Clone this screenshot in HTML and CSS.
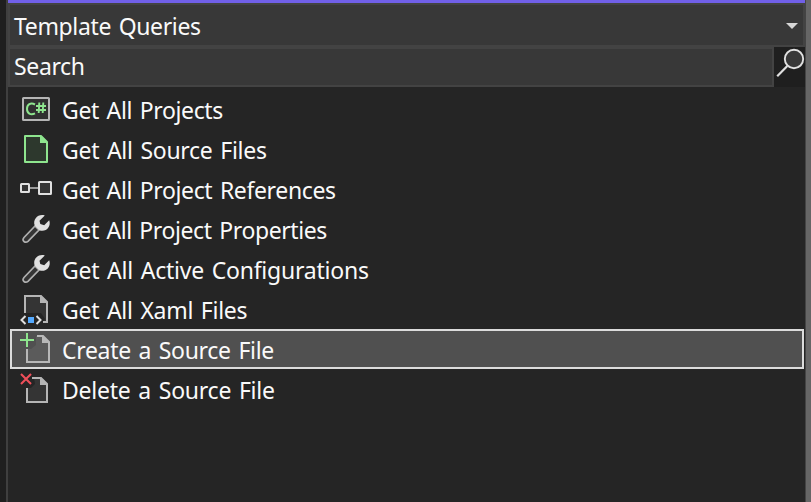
FILE: index.html
```html
<!DOCTYPE html>
<html lang="en">
<head>
<meta charset="utf-8">
<title>Template Queries</title>
<link rel="stylesheet" href="styles.css">
</head>
<body>
<main class="panel">
  <div class="accent"></div>
  <header class="dropdown"><span class="title">Template Queries</span>
    <svg class="caret" width="12" height="6" viewBox="0 0 12 6"><path d="M0 0h12L6 6z" fill="#d6d6d6"/></svg>
  </header>
  <div class="search">
    <div class="field"><span class="hint">Search</span></div>
    <div class="go"><svg width="31" height="40" viewBox="0 0 31 40"><circle cx="20" cy="12" r="9.2" fill="#383838" stroke="#e0e0e0" stroke-width="1.9"/><path d="M13.3 19L3.2 29.2" stroke="#e0e0e0" stroke-width="2.2"/></svg></div>
  </div>
  <ul class="list">
    <li class="row">
      <svg class="icon" viewBox="0 0 36 40"><rect x="5" y="9" width="26" height="22" rx=".5" fill="#303030" stroke="#b5b5b5" stroke-width="2"/><path d="M17 15.5C12.5 13.2 9 15.6 9 19.9s3.5 6.7 8 4.5" fill="none" stroke="#8ee58e" stroke-width="2"/><path d="M21.3 13.5L20.7 24M25.3 13.5L24.7 24M18 17h10M18 21h10" stroke="#8ee58e" stroke-width="1.9"/></svg>
      <span class="tight">Get All Projects</span></li>
    <li class="row">
      <svg class="icon" viewBox="0 0 36 40"><path d="M7 7h16l6 6v20H7z" fill="#2d382d" stroke="#8ee58e" stroke-width="2" stroke-linejoin="round"/><path d="M22 6v8h8z" fill="#8ee58e"/></svg>
      <span>Get All Source Files</span></li>
    <li class="row">
      <svg class="icon" viewBox="0 0 36 40"><path d="M12 19h8" stroke="#9b9b9b" stroke-width="2"/><g fill="#343434" stroke="#e0e0e0" stroke-width="2"><rect x="3" y="15" width="8" height="8" rx=".5"/><rect x="21" y="13" width="12" height="12" rx=".5"/></g></svg>
      <span class="tight">Get All Project References</span></li>
    <li class="row">
      <svg class="icon" viewBox="0 0 36 40"><path d="M17 17L6 28.5q-2 2.5 0 4t4-.2L21 21z" fill="#343434" stroke="#b0b0b0" stroke-width="1.7"/><path d="M26.8 6.5C20.5 4.5 14.4 10 16.7 16.6L21.4 21.3C28 23.6 33.5 17.5 31.2 11.2L26.2 16.2 22.3 15.1 21.5 11.7z" fill="#e0e0e0"/></svg>
      <span class="tighter">Get All Project Properties</span></li>
    <li class="row">
      <svg class="icon" viewBox="0 0 36 40"><path d="M17 17L6 28.5q-2 2.5 0 4t4-.2L21 21z" fill="#343434" stroke="#b0b0b0" stroke-width="1.7"/><path d="M26.8 6.5C20.5 4.5 14.4 10 16.7 16.6L21.4 21.3C28 23.6 33.5 17.5 31.2 11.2L26.2 16.2 22.3 15.1 21.5 11.7z" fill="#e0e0e0"/></svg>
      <span class="loose">Get All Active Configurations</span></li>
    <li class="row">
      <svg class="icon" viewBox="0 0 36 40"><path d="M7 24V7h16l6 6v20h-4l2-3-4-6z" fill="#343434"/><path d="M7 24V7h16l6 6v20h-4" fill="none" stroke="#b5b5b5" stroke-width="2"/><path d="M22 6v8h8z" fill="#b5b5b5"/><path d="M7.5 27L3.5 31l4 4M18.5 27l4 4-4 4" fill="none" stroke="#e0e0e0" stroke-width="2"/><rect x="10" y="28" width="6" height="6" fill="#55aaff"/></svg>
      <span>Get All Xaml Files</span></li>
    <li class="row selected">
      <svg class="icon" viewBox="0 0 36 40"><path d="M9 20h4l5-4V7h7l6 6v20H9z" fill="#5b5b5b"/><path d="M9 20v13h22V13l-6-6h-6" fill="none" stroke="#b8b8b8" stroke-width="2"/><path d="M24 6v8h8z" fill="#b8b8b8"/><path d="M9 4v14M2 11h14" stroke="#8ee58e" stroke-width="2"/></svg>
      <span class="create">Create a Source File</span></li>
    <li class="row">
      <svg class="icon" viewBox="0 0 36 40"><path d="M9 19h4l4-4-1-6h7l6 6v18H9z" fill="#343434"/><path d="M9 19v14h20V15l-6-6h-9" fill="none" stroke="#b5b5b5" stroke-width="2"/><path d="M22 8v8h8z" fill="#b5b5b5"/><path d="M3 5l10 10M13 5L3 15" stroke="#ef4f5a" stroke-width="2.1"/></svg>
      <span class="loose">Delete a Source File</span></li>
  </ul>
</main>
</body>
</html>
```
FILE: styles.css
```css
* { box-sizing: border-box; }
body {
  margin: 0;
  height: 502px;
  overflow: hidden;
  display: flex;
  background: #1f1f1f;
  color: #fafafa;
  font: 23px/40px "Noto Sans", sans-serif;
  letter-spacing: -.27px;
  word-spacing: 2px;
  white-space: nowrap;
}
.panel {
  flex: 1;
  margin-left: 6px;
  border-left: 2px solid #3f3f3f;
  border-right: 5px solid #666;
  box-shadow: inset -1px 0 #444;
  background: #252525;
}
.accent { height: 3px; background: #7160e8; margin-right: 1px; }
.dropdown {
  height: 44px;
  margin-right: 1px;
  border: 2px solid #434343;
  background: #383838;
  display: flex;
  align-items: center;
  justify-content: space-between;
  padding: 2px 5px 0 4px;
}
.title, .hint, .tight { letter-spacing: -.36px; }
.tighter { letter-spacing: -.4px; }
.create { letter-spacing: -.31px; }
.loose { letter-spacing: -.23px; }
.search { display: flex; height: 40px; margin-right: 1px; }
.field {
  flex: 1;
  border: 2px solid #434343;
  background: #383838;
  padding-left: 4px;
  line-height: 35px;
}
.go { width: 31px; background: #1f1f1f; }
.go svg, .icon { display: block; }
.list { list-style: none; margin: 0; padding: 2px 2px 0 2px; }
.row { display: flex; height: 40px; padding-left: 8px; line-height: 42px; }
.icon { width: 36px; height: 40px; margin-right: 8px; flex: none; }
.selected { background: #505050; box-shadow: inset 0 0 0 2px #dcdcdc; }
```
